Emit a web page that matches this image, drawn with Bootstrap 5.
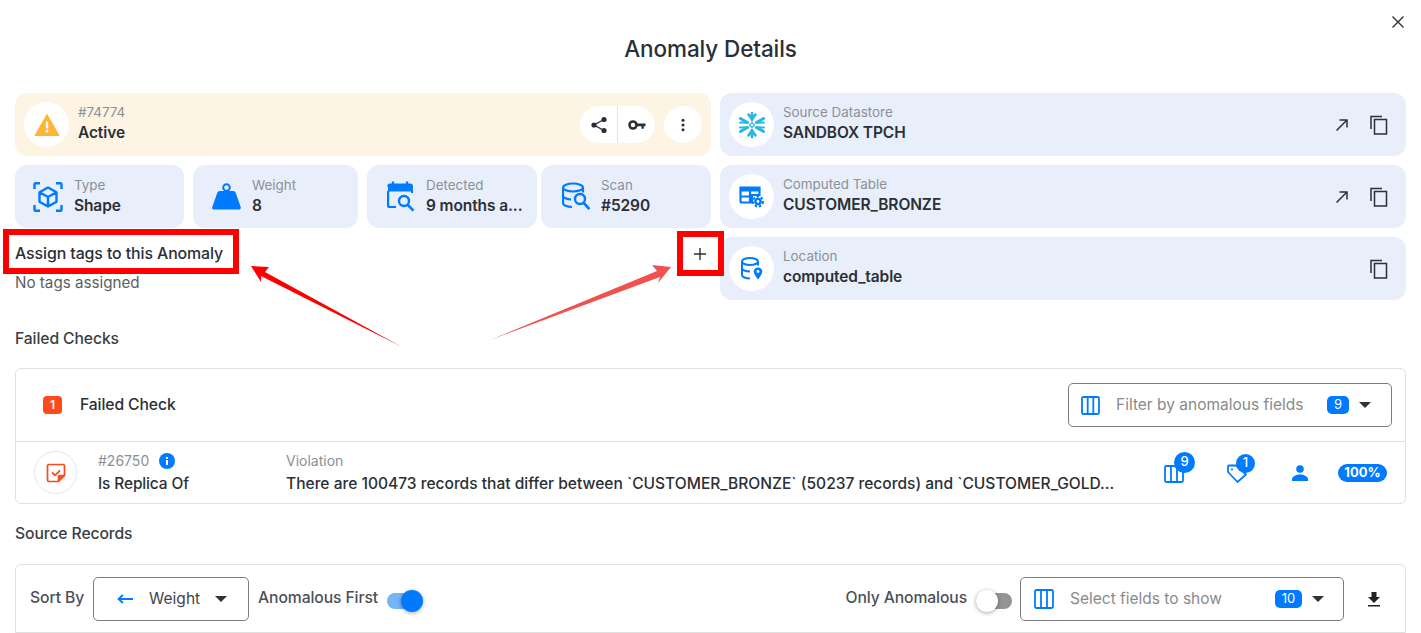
<!DOCTYPE html>
<html lang="en">
<head>
<meta charset="utf-8">
<title>Anomaly Details</title>
<link href="https://cdn.jsdelivr.net/npm/bootstrap@5.3.0/dist/css/bootstrap.min.css" rel="stylesheet">
<style>
html,body{height:633px;overflow:hidden;background:#fff}
body{font-family:Inter,"Noto Sans",sans-serif;color:#2b2f36;font-size:15px;position:relative}
svg{display:block;flex:none}
.ad-head{display:grid;grid-template-columns:1fr auto 1fr;height:93px;padding:0 15px}
.ad-title{font-size:22.5px;font-weight:500;margin:36px 0 0;line-height:25px;letter-spacing:-.1px;align-self:start}
.ad-close{justify-self:end;align-self:start;margin:14px 0 0 0;background:none;border:0;padding:0}
.ad-main{padding:0 15px}
.ad-top{display:flex;gap:9px}
.ad-left{width:696px}
.ad-right{width:686px;display:flex;flex-direction:column;gap:9px}
.ad-tile{background:#e8effb;border-radius:12px;height:63px;display:flex;align-items:center;padding-left:9px}
.ad-warn{background:#fef4e4;padding-right:9px}
.ad-circle{width:45px;height:45px;border-radius:50%;background:#fff;display:flex;align-items:center;justify-content:center;flex:none;margin-right:9px}
.ad-lab{font-size:13.4px;color:#8b8f96;line-height:18px;font-weight:400;margin-top:-3px;margin-bottom:1px}
.ad-val{font-size:15.5px;font-weight:600;line-height:22px;color:#2b2f36;white-space:nowrap;letter-spacing:-.1px}
.ad-grow{flex:1;min-width:0}
.ad-tiles{display:flex;margin-top:9px}
.ad-tiles .ad-lab{margin-top:0;margin-bottom:1px}
.ad-tiles svg{margin-right:11px}
.t1{width:169px;padding-left:18px;margin-right:9px}
.t2{width:165px;padding-left:19px;margin-right:9px}
.t3{width:170px;padding-left:20px;margin-right:4px}
.t4{width:170px;padding-left:21px}
.ad-pill{display:flex;height:37px;width:75px;background:#fff;border-radius:19px;margin-right:9px}
.ad-pill span{flex:1;display:flex;align-items:center;justify-content:center}
.ad-pill span+span{border-left:1px solid #e3e3e3}
.ad-round{width:38px;height:37px;border-radius:50%;background:#fff;display:flex;align-items:center;justify-content:center}
.ad-act{width:24px;display:flex;justify-content:center;margin-right:13px}
.ad-act.last{margin-right:15px}
.ad-tagrow{display:flex;justify-content:space-between;align-items:center;height:50px;padding-right:2px;padding-top:1px}
.ad-tagtitle{font-size:15.9px;font-weight:500;letter-spacing:-.1px}
.ad-notags{font-size:15.2px;color:#5a5e65;line-height:20px;margin-top:-5px}
.ad-sect{font-size:15.7px;font-weight:500;line-height:20px;color:#3a3e45;letter-spacing:-.1px}
.sect-a{margin-top:29px;margin-bottom:19px}
.sect-b{margin-top:20px;margin-bottom:20px}
.ad-box{border:1px solid #e0e0e0;border-radius:6px}
.ad-boxhead{height:73px;display:flex;align-items:center;padding:0 13px 0 27px;border-bottom:1px solid #e0e0e0}
.ad-num{width:19px;height:18px;border-radius:4px;background:#ff4a1c;color:#fff;font-size:12px;font-weight:600;display:flex;align-items:center;justify-content:center;margin-right:18px}
.ad-sel{height:44px;border:1px solid #7c7c7c;border-radius:5px;display:flex;align-items:center;color:#8a8a8a;font-size:15.5px;background:#fff}
.ad-sel1{width:324px;padding:0 20px 0 12px}
.ad-sel2{width:324px;padding:0 19px 0 13px}
.ad-sel0{width:156px;padding:0 21px 0 23px;color:#3f4349}
.ad-cnt{background:#007aff;color:#fff;border-radius:5px;height:18px;min-width:22px;padding:0 4px;font-size:13px;display:flex;align-items:center;justify-content:center;margin-right:10px}
.ad-caret{width:0;height:0;border-left:6px solid transparent;border-right:6px solid transparent;border-top:6px solid #333;flex:none}
.ad-row{height:61px;display:flex;align-items:center;padding-left:18px}
.ad-ring{width:43px;height:43px;border-radius:50%;border:1px solid #e6e6e6;display:flex;align-items:center;justify-content:center;margin-right:21px;flex:none}
.ad-colid{width:188px;flex:none}
.ad-colv{width:832px;flex:none;margin-right:46px}
.ad-trunc{white-space:nowrap;font-size:15.55px;line-height:22px;font-weight:500}
.ad-id{display:flex;align-items:center;gap:10px;font-size:14px;color:#8b8f96;line-height:20px;margin-bottom:2px}
.ad-name{font-size:15.4px;font-weight:500;line-height:22px;letter-spacing:-.1px}
.ad-ic{position:relative;width:20px;height:20px;flex:none}
.ad-dot{position:absolute;background:#007aff;color:#fff;border-radius:50%;display:flex;align-items:center;justify-content:center;font-size:13px;font-weight:500}
.ad-score{width:49px;height:18px;border-radius:9px;background:#007aff;color:#fff;font-size:13px;font-weight:700;display:flex;align-items:center;justify-content:center;margin-left:29px}
.ad-tool{height:69px;display:flex;align-items:center;padding:0 24px 0 14px;border-radius:6px 6px 0 0;color:#4c5057}
.ad-tooltxt{font-size:15.7px;font-weight:500;letter-spacing:-.1px}
.ad-tool .ad-tooltxt{padding-bottom:2px}
.ad-gapl{margin-left:9px}
.ad-sw{position:relative;width:28px;height:16px;border-radius:8px;flex:none;margin:4px 0 0 9px}
.ad-sw i{position:absolute;top:-3px;width:22px;height:22px;border-radius:50%;box-shadow:0 1px 4px rgba(0,0,0,.35)}
.ad-on{background:#74b4f7}
.ad-on i{right:-8px;background:#007aff}
.ad-off{background:#949494;margin-left:9px;width:36px}
.ad-off i{left:0;background:#fff}
.ad-notes{position:absolute;left:0;top:0;width:1421px;height:633px;pointer-events:none}
</style>
</head>
<body>
<div class="ad-head">
  <div></div>
  <h1 class="ad-title">Anomaly Details</h1>
  <button class="ad-close" aria-label="Close"><svg width="16" height="16" viewBox="0 0 16 16"><path d="M2.500 2.500l11 11M13.500 2.500l-11 11" stroke="#2b2f36" stroke-width="1.400" fill="none"/></svg></button>
</div>
<div class="ad-main">
  <div class="ad-top">
    <div class="ad-left">
      <div class="ad-tile ad-warn">
        <div class="ad-circle"><svg width="26" height="24" viewBox="0 0 26 24"><path d="M13 1.500L25 22.500H1z" fill="#ffb434" stroke="#ffb434" stroke-linejoin="round"/><rect x="11.800" y="8.500" width="2.400" height="7" fill="#fff"/><rect x="11.800" y="17" width="2.400" height="2.400" fill="#fff"/></svg></div>
        <div class="ad-grow"><div class="ad-lab">#74774</div><div class="ad-val">Active</div></div>
        <div class="ad-pill">
          <span><svg width="18" height="18" viewBox="0 0 18 18"><g fill="#2b2f36"><circle cx="14" cy="3.500" r="2.600"/><circle cx="4" cy="9" r="2.600"/><circle cx="14" cy="14.500" r="2.600"/></g><path d="M14 3.500L4 9l10 5.500" stroke="#2b2f36" stroke-width="1.400" fill="none"/></svg></span>
          <span><svg width="18" height="18" viewBox="0 0 18 18"><circle cx="5" cy="9" r="3.500" fill="none" stroke="#2b2f36" stroke-width="2.600"/><path d="M8 7.500h9.500v2.800h-1.700v2.400h-2.300v-2.400H8z" fill="#2b2f36"/></svg></span>
        </div>
        <div class="ad-round"><svg width="16" height="16" viewBox="0 0 16 16"><g fill="#2b2f36"><circle cx="8" cy="3.200" r="1.500"/><circle cx="8" cy="8" r="1.500"/><circle cx="8" cy="12.800" r="1.500"/></g></svg></div>
      </div>
      <div class="ad-tiles">
        <div class="ad-tile t1"><svg width="30" height="30" viewBox="0 0 30 30" fill="none" stroke="#007aff" stroke-width="2.400"><path d="M1.500 7V2.200a1 1 0 0 1 1-1H7M23 1.200h4.500a1 1 0 0 1 1 1V7M28.500 23v4.800a1 1 0 0 1-1 1H23M7 28.800H2.500a1 1 0 0 1-1-1V23"/><path d="M15 5.500l8.500 4.800v9.400L15 24.500l-8.500-4.800v-9.400zM6.500 10.300L15 15l8.500-4.700M15 15v9.500" stroke-linejoin="round"/></svg><div><div class="ad-lab">Type</div><div class="ad-val">Shape</div></div></div>
        <div class="ad-tile t2"><svg width="29" height="27" viewBox="0 0 29 27"><circle cx="14.500" cy="4.500" r="3.300" fill="none" stroke="#007aff" stroke-width="2"/><path d="M8 8h13c1.500 0 2.500.8 2.900 2.200L28.700 24c.4 1.300-.4 2.600-1.700 2.600H2C.7 26.600-.1 25.300.3 24L5.100 10.200C5.500 8.800 6.500 8 8 8z" fill="#007aff"/></svg><div><div class="ad-lab">Weight</div><div class="ad-val">8</div></div></div>
        <div class="ad-tile t3"><svg width="28" height="32" viewBox="0 0 28 32" fill="none"><path d="M1 5.500a2 2 0 0 1 2-2h20a2 2 0 0 1 2 2V12" stroke="#007aff" stroke-width="2"/><path d="M1 3.500h24v7H1z" fill="#007aff"/><path d="M6 .5v4M20 .5v4" stroke="#007aff" stroke-width="2.400"/><path d="M1.100 10v14.500a1.500 1.500 0 0 0 1.500 1.500H9" stroke="#007aff" stroke-width="2.200"/><circle cx="17" cy="20" r="5" stroke="#007aff" stroke-width="2.400"/><path d="M20.800 24l5.700 5.700" stroke="#007aff" stroke-width="2.600"/></svg><div style="min-width:0"><div class="ad-lab">Detected</div><div class="ad-val">9 months a...</div></div></div>
        <div class="ad-tile t4"><svg width="28" height="29" viewBox="0 0 28 29" fill="none" stroke="#007aff" stroke-width="2.200"><ellipse cx="11" cy="5.500" rx="10" ry="4"/><path d="M1 5.500V21c0 2.200 4 4 9 4M21 5.500v5M1 13.500c0 2.200 4 4 8 4"/><circle cx="18" cy="17" r="5" stroke-width="2.400"/><path d="M21.800 21l5.500 6" stroke-width="2.600"/></svg><div><div class="ad-lab">Scan</div><div class="ad-val">#5290</div></div></div>
      </div>
      <div class="ad-tagrow"><span class="ad-tagtitle">Assign tags to this Anomaly</span><svg width="18" height="18" viewBox="0 0 18 18"><path d="M9 3v12M3 9h12" stroke="#2b2f36" stroke-width="1.400"/></svg></div>
      <div class="ad-notags">No tags assigned</div>
    </div>
    <div class="ad-right">
      <div class="ad-tile">
        <div class="ad-circle"><svg width="28" height="28" viewBox="0 0 28 28" fill="none" stroke="#29b5e8" stroke-width="3" stroke-linecap="round"><path d="M14 2v7M14 19v7M10.500 3.500L14 8.500l3.500-5M10.500 24.500l3.500-5 3.500 5" stroke-width="2.600"/><path d="M2.500 7.500l7 4M18.500 16.500l7 4M2.500 20.500l7-4M18.500 11.500l7-4"/><path d="M2 11.500l7.500.2M2 16.500l7.500-.2M26 11.500l-7.500.2M26 16.500l-7.500-.2" stroke-width="2"/><path d="M14 11.500l2.500 2.500-2.500 2.500-2.500-2.500z" stroke-width="1.200"/></svg></div>
        <div class="ad-grow"><div class="ad-lab">Source Datastore</div><div class="ad-val">SANDBOX TPCH</div></div>
        <div class="ad-act"><svg width="16" height="16" viewBox="0 0 16 16"><path d="M2.500 13.500L13 3M5.500 3H13v7.500" stroke="#2b2f36" stroke-width="1.500" fill="none"/></svg></div>
        <div class="ad-act last"><svg width="18" height="20" viewBox="0 0 18 20" fill="none" stroke="#2b2f36" stroke-width="1.500"><path d="M1 14V1.500h11"/><rect x="4.500" y="4.500" width="12" height="14.500"/></svg></div>
      </div>
      <div class="ad-tile">
        <div class="ad-circle"><svg width="26" height="24" viewBox="0 0 26 24" fill="none"><path d="M1.500 2.500h19v7.500H13v7.500H3a1.500 1.500 0 0 1-1.500-1.500z" stroke="#007aff" stroke-width="2.200"/><path d="M1.500 2.500h19v4h-19z" fill="#007aff"/><path d="M1.500 11.500h11M11 6v11.500" stroke="#007aff" stroke-width="2.200"/><circle cx="19" cy="16.500" r="2.600" stroke="#007aff" stroke-width="2.400"/><circle cx="19" cy="16.500" r="5" stroke="#007aff" stroke-width="2" stroke-dasharray="2.500 1.800"/></svg></div>
        <div class="ad-grow"><div class="ad-lab">Computed Table</div><div class="ad-val">CUSTOMER_BRONZE</div></div>
        <div class="ad-act"><svg width="16" height="16" viewBox="0 0 16 16"><path d="M2.500 13.500L13 3M5.500 3H13v7.500" stroke="#2b2f36" stroke-width="1.500" fill="none"/></svg></div>
        <div class="ad-act last"><svg width="18" height="20" viewBox="0 0 18 20" fill="none" stroke="#2b2f36" stroke-width="1.500"><path d="M1 14V1.500h11"/><rect x="4.500" y="4.500" width="12" height="14.500"/></svg></div>
      </div>
      <div class="ad-tile">
        <div class="ad-circle"><svg width="22" height="24" viewBox="0 0 22 24" fill="none" stroke="#007aff" stroke-width="2"><ellipse cx="9" cy="4.500" rx="8" ry="3.500"/><path d="M1 4.500V18c0 2 3.500 3.500 8 3.500M17 4.500v4M1 11c0 2 3.500 3.500 8 3.500"/><path d="M17 10.500c2.500 0 4.300 1.800 4.300 4 0 2.700-4.300 8-4.300 8s-4.300-5.300-4.300-8c0-2.200 1.800-4 4.300-4z" fill="#007aff" stroke="none"/><circle cx="17" cy="14.500" r="1.400" fill="#fff" stroke="none"/></svg></div>
        <div class="ad-grow"><div class="ad-lab">Location</div><div class="ad-val">computed_table</div></div>
        <div class="ad-act last"><svg width="18" height="20" viewBox="0 0 18 20" fill="none" stroke="#2b2f36" stroke-width="1.500"><path d="M1 14V1.500h11"/><rect x="4.500" y="4.500" width="12" height="14.500"/></svg></div>
      </div>
    </div>
  </div>
  <div class="ad-sect sect-a">Failed Checks</div>
  <div class="ad-box">
    <div class="ad-boxhead">
      <span class="ad-num">1</span><span class="ad-tooltxt ad-grow">Failed Check</span>
      <div class="ad-sel ad-sel1">
        <svg width="19" height="19" viewBox="0 0 19 19" fill="none" stroke="#007aff" stroke-width="1.800" class="me-3"><rect x="1" y="1" width="17" height="17" rx="1.500"/><path d="M6.700 1v17M12.300 1v17"/></svg>
        <span class="ad-grow">Filter by anomalous fields</span><span class="ad-cnt">9</span><span class="ad-caret"></span>
      </div>
    </div>
    <div class="ad-row">
      <div class="ad-ring"><svg width="20" height="20" viewBox="0 0 20 20" fill="none" stroke="#ff4a1c" stroke-width="1.700"><path d="M12.500 18.500H3a1.500 1.500 0 0 1-1.500-1.500V3A1.500 1.500 0 0 1 3 1.500h14A1.500 1.500 0 0 1 18.500 3v9.500z" stroke-linejoin="round"/><path d="M12.500 18.500v-4.500a1.500 1.500 0 0 1 1.500-1.500h4.500" fill="#ff4a1c"/><path d="M6 9.500l3 2.800 5-5" stroke-width="1.900"/></svg></div>
      <div class="ad-colid">
        <div class="ad-id">#26750 <svg width="16" height="16" viewBox="0 0 16 16"><circle cx="8" cy="8" r="8" fill="#007aff"/><rect x="7" y="7" width="2" height="5" fill="#fff"/><rect x="7" y="4" width="2" height="2" fill="#fff"/></svg></div>
        <div class="ad-name">Is Replica Of</div>
      </div>
      <div class="ad-colv">
        <div class="ad-id">Violation</div>
        <div class="ad-trunc">There are 100473 records that differ between `CUSTOMER_BRONZE` (50237 records) and `CUSTOMER_GOLD...</div>
      </div>
      <div class="ad-ic me-4"><svg width="20" height="20" viewBox="0 0 20 20" fill="none" stroke="#007aff" stroke-width="1.800"><rect x="1" y="3" width="18" height="16" rx="1.500"/><path d="M7 3v16M13 3v16"/></svg><span class="ad-dot" style="width:21px;height:21px;left:10px;top:-11px">9</span></div>
      <div class="ad-ic" style="margin-left:19px"><svg width="21" height="21" viewBox="0 0 21 21" fill="none" stroke="#007aff" stroke-width="1.800"><path d="M1 3.500V9l9.500 10 8.500-7.500L9 2.500H2a1 1 0 0 0-1 1z" stroke-linejoin="round"/><circle cx="5" cy="6.500" r="1.100" fill="#007aff" stroke="none"/></svg><span class="ad-dot" style="width:19px;height:19px;left:9px;top:-9px">1</span></div>
      <div style="margin-left:44px"><svg width="18" height="16" viewBox="0 0 18 16"><circle cx="9" cy="4" r="3.800" fill="#007aff"/><path d="M1 16v-1.500C1 11.500 5 9.500 9 9.500s8 2 8 5V16z" fill="#007aff"/></svg></div>
      <div class="ad-score">100%</div>
    </div>
  </div>
  <div class="ad-sect sect-b">Source Records</div>
  <div class="ad-box ad-tool">
    <span class="ad-tooltxt" style="margin-right:9px">Sort By</span>
    <div class="ad-sel ad-sel0">
      <svg width="16" height="10" viewBox="0 0 16 10" class="me-3"><path d="M16 5H2M6 1L1.500 5 6 9" stroke="#007aff" stroke-width="1.800" fill="none"/></svg>
      <span class="ad-grow">Weight</span><span class="ad-caret"></span>
    </div>
    <span class="ad-tooltxt ad-gapl">Anomalous First</span>
    <span class="ad-sw ad-on"><i></i></span>
    <span class="ad-grow"></span>
    <span class="ad-tooltxt">Only Anomalous</span>
    <span class="ad-sw ad-off"><i></i></span>
    <div class="ad-sel ad-sel2 ms-2">
      <svg width="20" height="20" viewBox="0 0 20 20" fill="none" stroke="#007aff" stroke-width="1.800" class="me-3"><rect x="1" y="1" width="18" height="18" rx="1.500"/><path d="M7 1v18M13 1v18"/></svg>
      <span class="ad-grow">Select fields to show</span><span class="ad-cnt" style="min-width:27px">10</span><span class="ad-caret"></span>
    </div>
    <svg width="14" height="16" viewBox="0 0 14 16" style="margin-left:23px"><path d="M4.500 1h5v5H13L7 12 1 6h3.500z" fill="#222"/><rect x="1" y="14" width="12" height="1.500" fill="#222"/></svg>
  </div>
</div>
<svg class="ad-notes" viewBox="0 0 1421 633" aria-hidden="true">
  <rect x="6" y="232" width="230" height="39" fill="none" stroke="#ff0000" stroke-width="6"/>
  <rect x="680" y="234" width="41" height="39" fill="none" stroke="#ff0000" stroke-width="6"/>
  <path d="M251 266L269 267L265 272L402 347L261 276L261 282z" fill="#ff0000"/>
  <path d="M671 267L652 265L657 271L490 340L660 277L658 283z" fill="#ef5350"/>
</svg>
</body>
</html>
